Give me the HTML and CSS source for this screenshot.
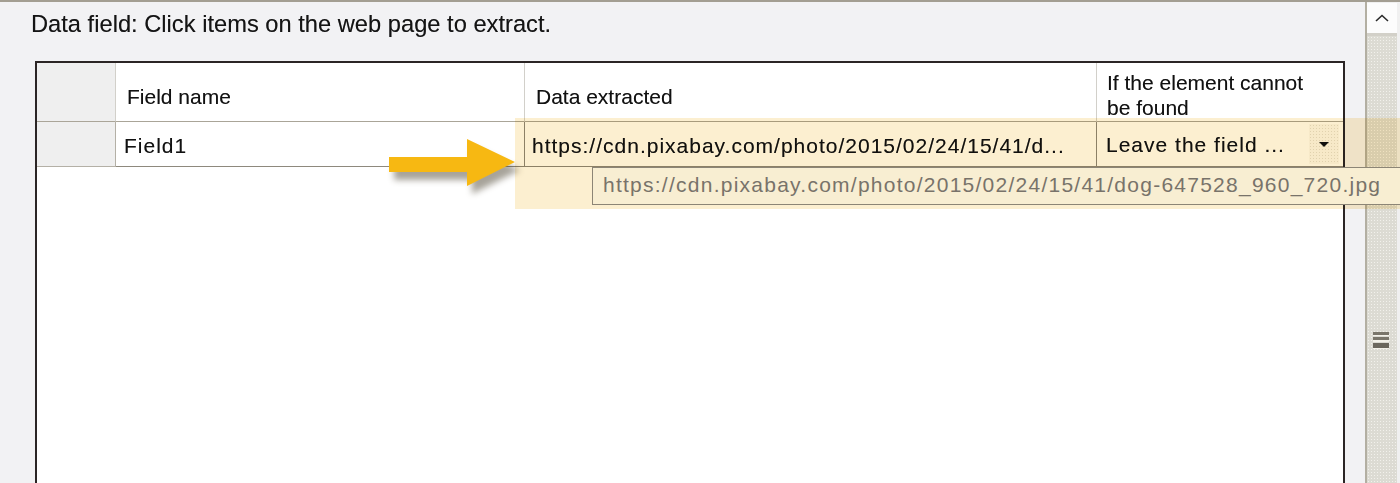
FILE: index.html
```html
<!DOCTYPE html>
<html lang="en">
<head>
<meta charset="utf-8">
<title>Data field</title>
<link rel="stylesheet" href="styles.css">
</head>
<body>
<div class="stage">
  <div class="topline"></div>
  <div class="window">
    <div class="content">
      <p class="title">Data field: Click items on the web page to extract.</p>
      <div class="frame">
        <div class="grid">
          <div class="head rowhead"></div>
          <div class="head single">Field name</div>
          <div class="head single">Data extracted</div>
          <div class="head double">If the element cannot<br>be found</div>
          <div class="data rowhead"></div>
          <div class="data name">Field1</div>
          <div class="data value">https://cdn.pixabay.com/photo/2015/02/24/15/41/d...</div>
          <div class="data choice"><span class="choice-text">Leave the field ...</span><span class="dropbtn"><span class="tri"></span></span></div>
        </div>
      </div>
    </div>
    <div class="scroll">
      <div class="upbtn">
        <svg width="14" height="8" viewBox="0 0 14 8"><polyline points="1,7 7,1.5 13,7" fill="none" stroke="#2a2a2a" stroke-width="1.6"/></svg>
      </div>
      <div class="track">
        <svg class="grip" width="16" height="17" viewBox="0 0 16 17">
          <rect x="0" y="0" width="16" height="3" fill="#7a766b"/>
          <rect x="0" y="3" width="16" height="1" fill="#f4f2ea"/>
          <rect x="0" y="5" width="16" height="3" fill="#7a766b"/>
          <rect x="0" y="8" width="16" height="2" fill="#f4f2ea"/>
          <rect x="0" y="11" width="16" height="5" fill="#6c685e"/>
          <rect x="0" y="16" width="16" height="1" fill="#f4f2ea"/>
        </svg>
      </div>
    </div>
  </div>
  <div class="highlight"></div>
  <div class="tooltip">https://cdn.pixabay.com/photo/2015/02/24/15/41/dog-647528_960_720.jpg</div>
  <svg class="arrow" width="150" height="75" viewBox="0 0 150 75">
    <polygon points="9,27 87,27 87,9 135,32 87,56 87,42 9,42" fill="#f7b812"/>
  </svg>
</div>
</body>
</html>
```

FILE: styles.css
```css
* { box-sizing: border-box; }
html, body { margin: 0; height: 100%; }
body {
  background: #f2f2f4;
  font-family: "Liberation Sans", Arial, sans-serif;
  color: #111;
  overflow: hidden;
}
.stage { position: relative; width: 1400px; height: 483px; overflow: hidden; }
.topline { height: 2px; background: #a39e92; }
.window { display: flex; height: 481px; }
.content {
  flex: 1;
  display: flex;
  flex-direction: column;
  padding: 0 20px 0 31px;
}
.title {
  margin: 0;
  padding-top: 8px;
  font-size: 23.7px;
  line-height: 28px;
  color: #141414;
  text-shadow: 0 0 0.5px rgba(0, 0, 0, 0.4);
}
.frame {
  flex: 1;
  margin: 23px 0 0 4px;
  border: 2px solid #2b2525;
  border-bottom: none;
  background: #fff;
}
.grid {
  display: grid;
  grid-template-columns: 79px 409px 572px 1fr;
  grid-template-rows: 59px 45px;
}
.head {
  background: #fff;
  border-right: 1px solid #d2d0ca;
  border-bottom: 1px solid #aaa598;
  font-size: 21px;
  line-height: 25px;
  padding-left: 11px;
  color: #111;
  text-shadow: 0 0 0.5px rgba(0, 0, 0, 0.4);
}
.head.single { padding-top: 21px; }
.head.double { padding-top: 7px; padding-left: 10px; border-right: none; }
.rowhead { background: #efefef; }
.data {
  font-size: 21px;
  line-height: 43px;
  padding-top: 2px;
  letter-spacing: 1px;
  white-space: nowrap;
  overflow: hidden;
  color: #111;
  text-shadow: 0 0 0.5px rgba(0, 0, 0, 0.4);
  border-right: 1px solid #8e897d;
  border-bottom: 1px solid #8e897d;
}
.data.rowhead { border-right-color: #b4b0a6; border-bottom-color: #b4b0a6; }
.name { padding-left: 8px; background: #fff; }
.value { padding-left: 7px; }
.choice {
  display: flex;
  justify-content: space-between;
  align-items: center;
  padding-left: 9px;
  padding-top: 0;
  border-right: none;
}
.dropbtn {
  width: 30px;
  height: 40px;
  margin-right: 4px;
  background-color: #faf9f5;
  background-image: radial-gradient(circle, #e4e0d6 0.6px, transparent 0.8px);
  background-size: 3px 3px;
  display: flex;
  align-items: center;
  justify-content: center;
}
.tri {
  width: 0;
  height: 0;
  border-left: 5px solid transparent;
  border-right: 5px solid transparent;
  border-top: 5px solid #111;
}
.scroll {
  width: 35px;
  border-left: 2px solid #b3afa2;
  display: flex;
  flex-direction: column;
  background: #f0f0f0;
}
.upbtn {
  height: 33px;
  margin: 1px 3px 0 0;
  background: #fcfcfc;
  display: flex;
  align-items: center;
  justify-content: center;
  border-bottom: 3px solid #d2d0c8;
}
.track {
  flex: 1;
  margin-right: 3px;
  background-color: #dcdbd3;
  background-image: radial-gradient(circle, #f2f1ec 0.7px, transparent 0.9px);
  background-size: 3px 3px;
  padding: 296px 0 0 6px;
}
.grip { display: block; }
.highlight {
  position: absolute;
  left: 515px;
  top: 118px;
  width: 885px;
  height: 91px;
  background: #fcefd0;
  mix-blend-mode: multiply;
}
.tooltip {
  position: absolute;
  left: 592px;
  top: 167px;
  right: -20px;
  height: 38px;
  border: 1px solid #8c8576;
  border-right: none;
  background: #f8eed2;
  color: #78736a;
  font-size: 21px;
  letter-spacing: 1.25px;
  line-height: 34px;
  padding-left: 10px;
  white-space: nowrap;
}
.arrow {
  position: absolute;
  left: 380px;
  top: 130px;
  filter: drop-shadow(5px 8px 3px rgba(60, 50, 30, 0.45));
}
```
